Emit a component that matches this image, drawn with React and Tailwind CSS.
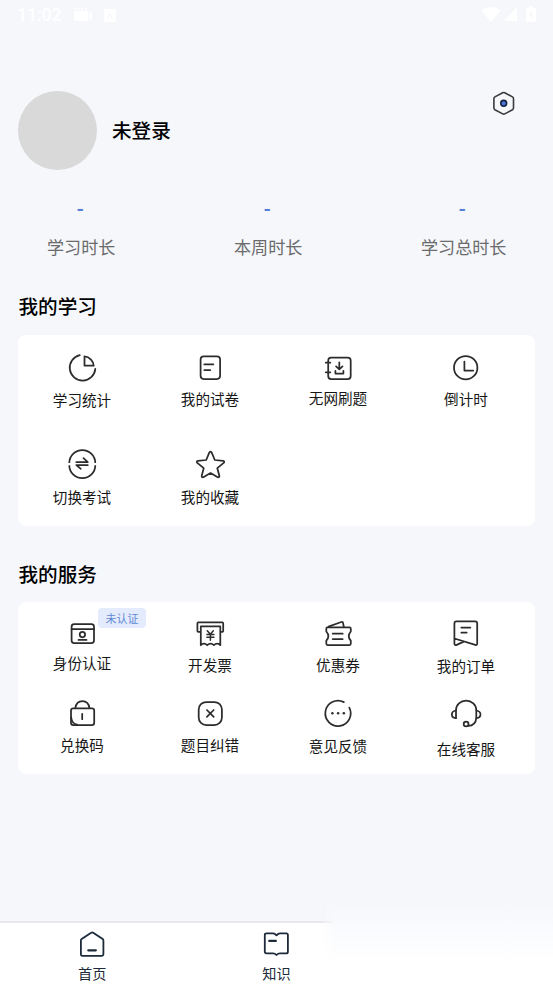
import React from "react";

const FONT = "font-['Noto_Sans_CJK_SC','Noto_Sans',sans-serif]";

function Icon({ children }) {
  return (
    <svg
      viewBox="-0.5 0 32 32"
      className="block h-8 w-8 shrink-0 text-[#2c2c2c]"
      fill="none"
      stroke="currentColor"
      strokeWidth="1.75"
      strokeLinecap="round"
      strokeLinejoin="round"
    >
      {children}
    </svg>
  );
}

const StatsIcon = () => (
  <Icon>
    <path d="M13.3 3.2A12.8 12.8 0 1 0 28.8 16.8" />
    <path d="M18 4.4v9.3h9.2C27.2 9.500 23 4.800 18 4.400z" />
  </Icon>
);
const PaperIcon = () => (
  <Icon>
    <rect x="6.1" y="4.4" width="19.500" height="22.600" rx="3.200" />
    <path d="M9.800 12.400h9M9.800 18h6" />
  </Icon>
);
const OfflineIcon = () => (
  <Icon>
    <rect x="5.700" y="5.700" width="22.500" height="21.300" rx="3" />
    <path d="M3.300 10.700h4.500M3.300 20.300h4.500M16.800 10.300v6.800M13.600 14.400l3.200 3 3.200-3M12.900 18.800v2.700h8v-2.700" />
  </Icon>
);
const ClockIcon = () => (
  <Icon>
    <circle cx="15.200" cy="15.700" r="11.700" />
    <path d="M13.900 9.500v9.100h8.800" />
  </Icon>
);
const SwitchIcon = () => (
  <Icon>
    <path d="M2.800 15A13 13 0 0 1 28.800 15M2.800 17.200A13 13 0 0 0 28.800 17.200" strokeLinecap="butt" />
    <path d="M9.800 14.100h11.500l-4.300-4M21.300 17H9.800l4.500 3.800" />
  </Icon>
);
const StarIcon = () => (
  <Icon>
    <path d="M14.900 4.400Q16 2.800 17.100 4.400L20.300 12 28.600 12.800Q30.600 13.400 29.200 14.900L22.800 20.200 24.900 27.900Q25 29.700 23.300 29.200L16 25.100 8.800 29.200Q7 29.700 7.200 27.900L9.200 20.200 2.800 14.900Q1.500 13.400 3.400 12.800L11.700 12Z" />
  </Icon>
);
const IdentityIcon = () => (
  <Icon>
    <rect x="5.100" y="7.100" width="22.400" height="19" rx="2.600" />
    <path d="M5.100 12.100h22.400M12 22.900h8" />
    <circle cx="15.900" cy="17.600" r="2.700" />
  </Icon>
);
const InvoiceIcon = () => (
  <Icon>
    <path d="M5.800 14.800H3.700Q2.900 14.800 2.900 14V6.300Q2.900 5.400 3.800 5.400H27.800Q28.700 5.400 28.700 6.300V14Q28.700 14.800 27.900 14.800H26.200" />
    <path d="M6.300 9.400H25.800V28.200Q22.600 25 19.400 28.200Q16 25 12.700 28.200Q9.500 25 6.300 28.200Z" />
    <path d="M12.800 13.800l3 3.500 3-3.500M12.400 17.600h7M12.400 20.300h7M15.900 17.300v6" strokeWidth="1.500" />
  </Icon>
);
const CouponIcon = () => (
  <Icon>
    <path d="M5 10.300H27Q28.300 10.300 28.300 11.700V14.500Q24.200 19.300 28.300 23.700V26.500Q28.300 28 27 28H5Q3.800 28 3.800 26.500V23.700Q8 19.300 3.800 14.500V11.700Q3.800 10.300 5 10.300Z" />
    <path d="M6 9.600L18.800 5Q20.200 4.600 20.500 5.900L21.300 9.800M10.200 16.700h10M10.200 22.100h10" />
  </Icon>
);
const OrderIcon = () => (
  <Icon>
    <path d="M3.900 21.500V6.500Q3.900 4.400 6 4.400H24.700Q26.700 4.400 26.700 6.500V26.500Q26.700 28.500 24.800 27.900L3.900 21.500V26.600Q4.200 28.900 6.200 27.900L13.300 24.600M10.800 10.500h9M10.800 15.500h5.400" />
  </Icon>
);
const RedeemIcon = () => (
  <Icon>
    <rect x="4.500" y="11.300" width="23.200" height="16.700" rx="2.300" />
    <path d="M8.900 10.800C9.500 6.300 12.100 4 15.900 4S22.300 6.300 22.900 10.800M15.700 16.800v5.400M4.700 20.500Q5.400 26.700 10.700 27.700" />
  </Icon>
);
const MistakeIcon = () => (
  <Icon>
    <rect x="4.200" y="5" width="23.200" height="23.200" rx="7.600" />
    <path d="M12.400 13l6.800 6.800M19.200 13l-6.800 6.800" />
  </Icon>
);
const FeedbackIcon = () => (
  <Icon>
    <path d="M21.300 5.100A12.700 12.700 0 1 0 26.800 10.600" />
    <g fill="currentColor" stroke="none">
      <circle cx="9.900" cy="16.300" r="1.250" />
      <circle cx="15.600" cy="16.300" r="1.250" />
      <circle cx="21.300" cy="16.300" r="1.250" />
    </g>
  </Icon>
);
const SupportIcon = () => (
  <Icon>
    <path d="M5.500 21.200V13.200C5.500 7.700 10 3.600 15.600 3.600S25.800 7.700 25.800 13.200V20.600C25.500 25.600 22.300 28.700 17.600 28.900" />
    <path d="M5.300 13.500C0 14.500 0 20.400 5.300 21.200M26 13.500C31.300 14.500 31.300 20.400 26 21.200" />
    <circle cx="15.600" cy="27" r="2.400" />
  </Icon>
);

function Entry({ icon: Glyph, label, gap, badge }) {
  return (
    <div className="relative flex flex-col items-center">
      <Glyph />
      <span className={`text-[14.6px] leading-5 text-[#161616] ${gap}`}>{label}</span>
      {badge && (
        <span className="absolute top-[-9px] left-[80px] flex h-5 w-12 items-center justify-center rounded bg-[#e4ebfc] text-[11px] leading-none text-[#5f8ad6]">
          {badge}
        </span>
      )}
    </div>
  );
}

function StatusBar() {
  return (
    <header className="flex h-8 items-center justify-between pr-[17px] pl-[17px] text-white">
      <div className="flex items-center">
        <span className="w-[56px] font-[Roboto,sans-serif] text-[17.5px] leading-none font-medium">11:02</span>
        <svg viewBox="0 0 20 14" className="h-3.5 w-5 -translate-y-px" fill="currentColor">
          <path d="M1 0h2v2H1zM4.500 0h2v2h-2zM8 0h2v2H8zM11.500 0h2v2h-2zM1 3h14v10H2q-1 0-1-1zM16 5l3-1v8l-3-1z" />
        </svg>
        <svg viewBox="0 0 12 13" className="ml-[11px] h-[13px] w-3 -translate-y-px" fill="currentColor" fillRule="evenodd">
          <path d="M1 0h10q1 0 1 1v11q0 1-1 1H1q-1 0-1-1V1q0-1 1-1zM6 3L3 10h1.300L6 6l1.700 4H9z" />
        </svg>
      </div>
      <div className="mt-[-4px] flex items-center">
        <svg viewBox="0 0 20 16" className="h-4 w-5" fill="currentColor">
          <path d="M0 4.500Q10-2.500 20 4.500L10 16z" />
        </svg>
        <svg viewBox="0 0 13 14" className="ml-[3px] h-3.5 w-[13px]" fill="currentColor">
          <path d="M13 0v14H0z" />
        </svg>
        <svg viewBox="0 0 10 16" className="ml-[9px] h-4 w-2.5" fill="currentColor" fillRule="evenodd">
          <path d="M3 0h4v2h2q1 0 1 1v12q0 1-1 1H1q-1 0-1-1V3q0-1 1-1h2zM5.500 4.500L3 9.500h1.600v3.500L7.200 8H5.500z" />
        </svg>
      </div>
    </header>
  );
}

const study = [
  { icon: StatsIcon, label: "学习统计", gap: "mt-[6px]" },
  { icon: PaperIcon, label: "我的试卷", gap: "mt-[5px]" },
  { icon: OfflineIcon, label: "无网刷题", gap: "mt-[4px]" },
  { icon: ClockIcon, label: "倒计时", gap: "mt-[5px]" },
  { icon: SwitchIcon, label: "切换考试", gap: "mt-[7px]" },
  { icon: StarIcon, label: "我的收藏", gap: "mt-[7px]" },
];

const services = [
  { icon: IdentityIcon, label: "身份认证", gap: "mt-[4px]", badge: "未认证" },
  { icon: InvoiceIcon, label: "开发票", gap: "mt-[6px]" },
  { icon: CouponIcon, label: "优惠券", gap: "mt-[6px]" },
  { icon: OrderIcon, label: "我的订单", gap: "mt-[7px]" },
  { icon: RedeemIcon, label: "兑换码", gap: "mt-[6px]" },
  { icon: MistakeIcon, label: "题目纠错", gap: "mt-[6px]" },
  { icon: FeedbackIcon, label: "意见反馈", gap: "mt-[7px]" },
  { icon: SupportIcon, label: "在线客服", gap: "mt-[10px]" },
];

const totals = [
  { label: "学习时长", width: "w-[187px]", dash: "pl-[29.5px]" },
  { label: "本周时长", width: "w-[187px]", dash: "pl-[29.5px]" },
  { label: "学习总时长", width: "w-[86px]", dash: "pl-[37.5px]" },
];

export default function App() {
  return (
    <div className={`relative flex h-[984px] w-[553px] flex-col overflow-hidden bg-[#f5f7fb] ${FONT}`}>
      <StatusBar />

      <section className="mt-[59px] flex h-[79px] items-start pr-[37px] pl-[18px]">
        <div className="h-[79px] w-[79px] rounded-full bg-[#d9d9d9]" />
        <h1 className="mt-[25px] ml-[15px] text-[19.6px] leading-7 font-medium text-black">未登录</h1>
        <svg viewBox="0 0 24 24" className="ml-auto h-6 w-6" fill="none">
          <path
            d="M12.700 1.700Q11.700 1.200 10.700 1.700L2.900 5.900Q1.900 6.500 1.900 7.600V17Q1.900 18.100 2.900 18.700L10.700 22.900Q11.700 23.400 12.700 22.900L20.500 18.700Q21.500 18.100 21.500 17V7.600Q21.500 6.500 20.500 5.900Z"
            stroke="#3b3b3d"
            strokeWidth="1.600"
          />
          <circle cx="11.700" cy="12.300" r="2.900" fill="#4a78da" stroke="#14203f" strokeWidth="1.600" />
        </svg>
      </section>

      <section className="mt-[26px] flex pl-[47px]">
        {totals.map((t) => (
          <div key={t.label} className={`flex shrink-0 flex-col ${t.width}`}>
            <span className={`translate-y-[1.5px] font-[Roboto,sans-serif] text-[19px] leading-6 font-bold text-[#5580d6] ${t.dash}`}>-</span>
            <span className="mt-[15px] text-[17.1px] leading-6 whitespace-nowrap text-[#6b6b6c]">{t.label}</span>
          </div>
        ))}
      </section>

      <h2 className="mt-[33px] ml-[18.5px] text-[19.6px] leading-7 font-medium text-black">我的学习</h2>
      <section className="mt-[15px] ml-[18px] h-[191px] w-[516.500px] shrink-0 rounded-lg bg-white pt-[17px]">
        <div className="grid w-[512px] auto-rows-[96px] grid-cols-4">
          {study.map((e) => (
            <Entry key={e.label} {...e} />
          ))}
        </div>
      </section>

      <h2 className="mt-[34px] ml-[18.5px] text-[19.6px] leading-7 font-medium text-black">我的服务</h2>
      <section className="mt-[14px] ml-[18px] h-[172px] w-[516.500px] shrink-0 rounded-lg bg-white pt-[15px]">
        <div className="grid w-[512px] auto-rows-[80px] grid-cols-4">
          {services.map((e) => (
            <Entry key={e.label} {...e} />
          ))}
        </div>
      </section>

      <nav className="mt-auto grid h-[63px] shrink-0 grid-cols-3 border-t-2 border-[#e9e9eb] bg-white text-[#1c2a3a]">
        <div className="flex flex-col items-center pt-[5px]">
          <svg viewBox="0 0 32 32" className="h-8 w-8" fill="none" stroke="currentColor" strokeWidth="1.800" strokeLinecap="round" strokeLinejoin="round">
            <path d="M15.200 4.700Q16.200 4 17.200 4.700L26.700 11.100Q27.400 11.600 27.400 12.500V26.300Q27.400 27.800 25.900 27.800H6.300Q4.900 27.800 4.900 26.300V12.500Q4.900 11.600 5.600 11.100Z" />
            <path d="M12.300 22.300h7.500" strokeWidth="2.300" />
          </svg>
          <span className="mt-[3px] text-[14.200px] leading-5">首页</span>
        </div>
        <div className="flex flex-col items-center pt-[5px]">
          <svg viewBox="0 0 32 32" className="h-8 w-8" fill="none" stroke="currentColor" strokeWidth="1.800" strokeLinecap="round" strokeLinejoin="round">
            <path d="M6.500 5.300H13Q14.800 5.300 16.500 7.300Q18.200 5.300 20 5.300H26.200Q27.900 5.300 27.900 7V23.700Q27.900 25.400 26.200 25.400H20Q18 25.400 16.500 27Q15 25.400 13 25.400H6.500Q4.800 25.400 4.800 23.700V7Q4.800 5.300 6.500 5.300Z" />
            <path d="M9.300 12.900h6.500" strokeWidth="2.300" />
          </svg>
          <span className="mt-[3px] text-[14.200px] leading-5">知识</span>
        </div>
      </nav>

      <div className="absolute right-0 bottom-0 h-[84px] w-[232px] bg-linear-to-b from-[#f5f7fb] via-[#fbfcfe] via-45% to-white to-75% mask-l-from-94% mask-l-to-100%" />
    </div>
  );
}
